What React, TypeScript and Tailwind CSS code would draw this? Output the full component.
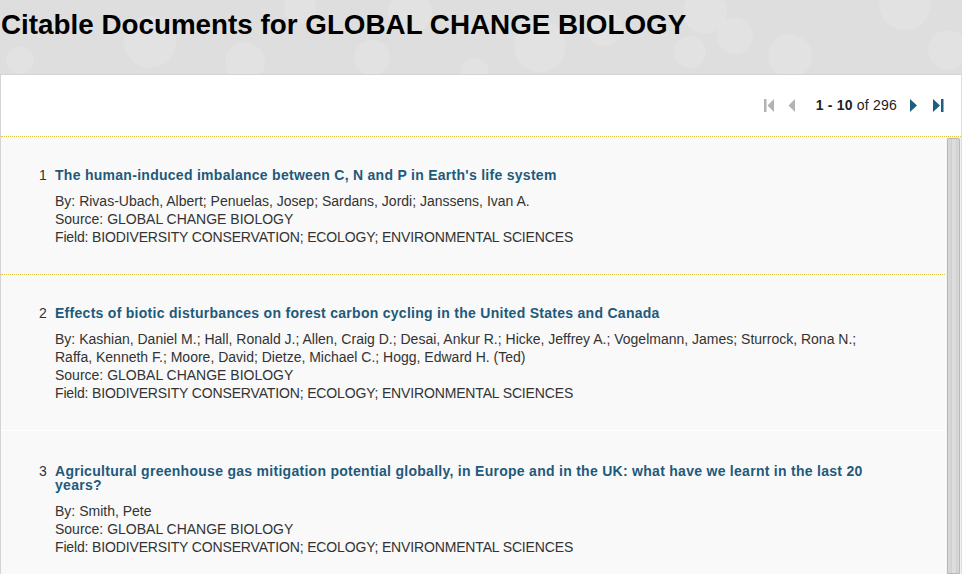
import React from 'react';

type Doc = {
  title: string;
  by: string;
  source: string;
  field: string;
};

const docs: Doc[] = [
  {
    title: "The human-induced imbalance between C, N and P in Earth's life system",
    by: 'Rivas-Ubach, Albert; Penuelas, Josep; Sardans, Jordi; Janssens, Ivan A.',
    source: 'GLOBAL CHANGE BIOLOGY',
    field: 'BIODIVERSITY CONSERVATION; ECOLOGY; ENVIRONMENTAL SCIENCES',
  },
  {
    title: 'Effects of biotic disturbances on forest carbon cycling in the United States and Canada',
    by: 'Kashian, Daniel M.; Hall, Ronald J.; Allen, Craig D.; Desai, Ankur R.; Hicke, Jeffrey A.; Vogelmann, James; Sturrock, Rona N.; Raffa, Kenneth F.; Moore, David; Dietze, Michael C.; Hogg, Edward H. (Ted)',
    source: 'GLOBAL CHANGE BIOLOGY',
    field: 'BIODIVERSITY CONSERVATION; ECOLOGY; ENVIRONMENTAL SCIENCES',
  },
  {
    title: 'Agricultural greenhouse gas mitigation potential globally, in Europe and in the UK: what have we learnt in the last 20 years?',
    by: 'Smith, Pete',
    source: 'GLOBAL CHANGE BIOLOGY',
    field: 'BIODIVERSITY CONSERVATION; ECOLOGY; ENVIRONMENTAL SCIENCES',
  },
  {
    title: 'Global change and the ecology of cities',
    by: 'Grimm, Nancy B.',
    source: 'GLOBAL CHANGE BIOLOGY',
    field: 'BIODIVERSITY CONSERVATION; ECOLOGY; ENVIRONMENTAL SCIENCES',
  },
];

// faint bubbles behind the page title
const bubbles = [
  [150, 42, 26], [245, 62, 20], [300, 8, 16], [410, 12, 22], [475, 72, 14],
  [540, 46, 26], [605, 28, 18], [690, 52, 16], [705, 12, 22], [735, 36, 18],
  [790, 56, 22], [905, 4, 26], [948, 50, 20], [20, 60, 14], [372, 58, 18],
];

function PagerIcon({ kind, active }: { kind: 'first' | 'prev' | 'next' | 'last'; active: boolean }) {
  const fill = active ? '#1d5f80' : '#b3b3b3';
  return (
    <svg width="11" height="13" viewBox="0 0 11 13" fill={fill}>
      {kind === 'first' && (
        <>
          <rect x="0" y="0" width="2.5" height="13" />
          <polygon points="10,0 3.5,6.5 10,13" />
        </>
      )}
      {kind === 'prev' && <polygon points="7,0 0.5,6.5 7,13" />}
      {kind === 'next' && <polygon points="1,0 8,6.5 1,13" />}
      {kind === 'last' && (
        <>
          <polygon points="0,0 7,6.5 0,13" />
          <rect x="8" y="0" width="2.5" height="13" />
        </>
      )}
    </svg>
  );
}

function DocItem({ n, doc, first }: { n: number; doc: Doc; first: boolean }) {
  return (
    <li
      className={
        first
          ? 'border-b border-dotted border-[#e0c544] pt-[31px] pb-[28px] pl-[38px] pr-[60px]'
          : n === 3
            ? 'border-b border-white pt-[33px] pb-[28px] pl-[38px] pr-[60px]'
            : 'border-b border-white pt-[31px] pb-[28px] pl-[38px] pr-[60px]'
      }
    >
      <div className="grid grid-cols-[16px_1fr]">
        <span className="text-[14px] leading-[14px] text-[#333]">{n}</span>
        <div>
          <a className="block text-[14px] leading-[14px] font-bold tracking-[0.28px] text-[#1f5a7b]">{doc.title}</a>
          <div className="mt-[10px] text-[14px] leading-[18px] text-[#333]">
            <div>By: {doc.by}</div>
            <div>Source: {doc.source}</div>
            <div className="tracking-[-0.15px]">Field: {doc.field}</div>
          </div>
        </div>
      </div>
    </li>
  );
}

export default function App() {
  return (
    <div className="h-[574px] w-[962px] overflow-hidden bg-[#dedede] font-['Liberation_Sans',Arial,sans-serif] flex flex-col">
      {/* header with bubble backdrop */}
      <header className="relative h-[74px] shrink-0">
        <svg className="absolute inset-0" width="962" height="74">
          {bubbles.map(([cx, cy, r], i) => (
            <circle key={i} cx={cx} cy={cy} r={r} fill="#ffffff" opacity="0.12" />
          ))}
        </svg>
        <h1 className="relative pl-[1px] pt-[9px] text-[27.8px] leading-[32px] font-bold text-black">
          Citable Documents for GLOBAL CHANGE BIOLOGY
        </h1>
      </header>

      <section className="flex-1 flex flex-col min-h-0 bg-white border-l border-t border-[#d4d4d4] mr-[1px]">
        {/* pager */}
        <div className="h-[62px] shrink-0 flex items-center justify-end pr-[17px] border-b border-dotted border-[#e0c544] text-[14px] text-[#222]">
          <PagerIcon kind="first" active={false} />
          <span className="ml-[13px]">
            <PagerIcon kind="prev" active={false} />
          </span>
          <span className="ml-[17px] tracking-[0.2px]">
            <b>1 - 10</b> of 296
          </span>
          <span className="ml-[12px]">
            <PagerIcon kind="next" active />
          </span>
          <span className="ml-[13px]">
            <PagerIcon kind="last" active />
          </span>
        </div>

        {/* results with scrollbar */}
        <div className="flex-1 flex min-h-0 bg-[#f9f9f9]">
          <ul className="flex-1 min-w-0">
            {docs.map((d, i) => (
              <DocItem key={i} n={i + 1} doc={d} first={i === 0} />
            ))}
          </ul>
          <div className="w-[16px] shrink-0 bg-[#f1f1f1] border-l border-[#ffffff] pt-[1px] pl-[1px]">
            <div className="h-full w-[13px] rounded-t-[2px] border border-[#b9b9b9] bg-[#d6d6d6] flex justify-center">
              <div className="w-[6px] h-full bg-[#dcdcdc] border-x border-[#cfcfcf]" />
            </div>
          </div>
        </div>
      </section>
    </div>
  );
}
